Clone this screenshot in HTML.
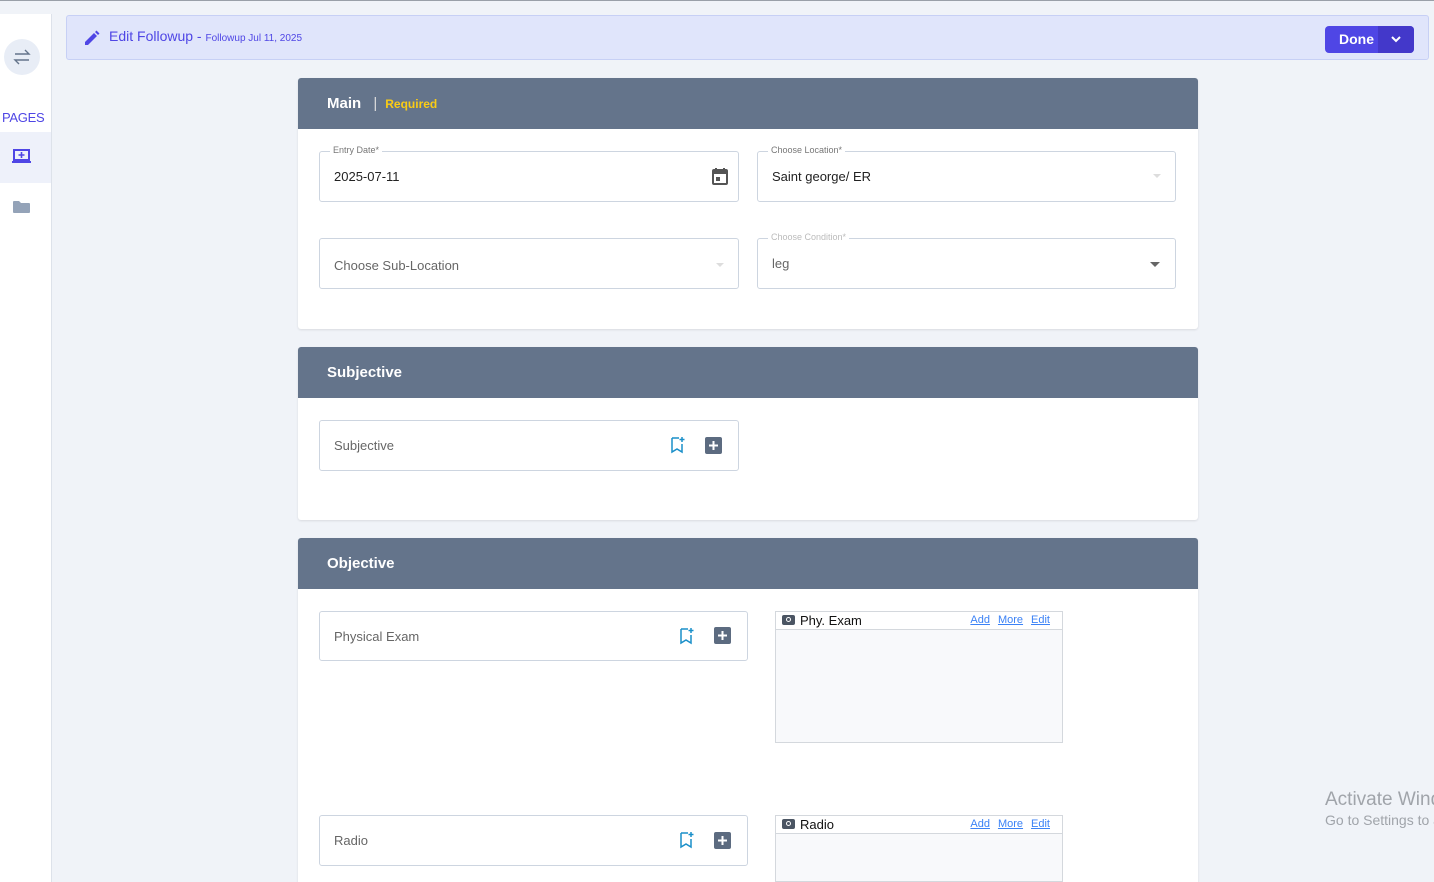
<!DOCTYPE html>
<html><head><meta charset="utf-8">
<style>
*{box-sizing:border-box;margin:0;padding:0}
html,body{width:1434px;height:882px;overflow:hidden}
body{background:#f0f3f8;font-family:"Liberation Sans",sans-serif;position:relative}
.topline{position:absolute;left:0;top:0;width:1434px;height:1px;background:#9aa0a8}
.side{position:absolute;left:0;top:14px;width:52px;height:868px;background:#fff;border-right:1px solid #dde2ea}
.swap{position:absolute;left:4px;top:25px;width:36px;height:36px;border-radius:50%;background:#e8edf6}
.pages{position:absolute;left:2px;top:96px;font-size:13px;color:#4f46e5;letter-spacing:-.3px}
.act{position:absolute;left:0;top:118px;width:51px;height:51px;background:#eef1fa}
.hdr{position:absolute;left:66px;top:15px;width:1363px;height:45px;background:#e0e5fb;border:1px solid #c7d0f5;border-radius:3px}
.hdr .t{position:absolute;left:42px;top:12px;font-size:14px;color:#4f46e5}
.hdr .t small{font-size:10px}
.done{position:absolute;right:14px;top:10px;width:89px;height:27px;background:#4f46e5;border-radius:4px;color:#fff;font-size:14px;font-weight:bold}
.done span{position:absolute;left:14px;top:5px}
.done i{position:absolute;right:0;top:0;width:36px;height:27px;background:#4338ca;border-radius:0 4px 4px 0}
.card{position:absolute;left:298px;width:900px;background:#fff;border-radius:3px;box-shadow:0 1px 2px rgba(0,0,0,.1)}
.ch{height:51px;background:#64748b;color:#fff;font-weight:bold;font-size:15px;padding:17px 0 0 29px;border-radius:3px 3px 0 0}
.ch .req{color:#facc15;font-size:12px;margin-left:8px}
.ch .bar{color:#ddd;font-weight:normal;margin-left:8px}
.f{position:absolute;height:51px;border:1px solid #cdd5e0;border-radius:3px;background:#fff;font-size:13px;color:#222}
.f .v{position:absolute;left:14px;top:17px}
.f .l{position:absolute;left:10px;top:-7px;background:#fff;padding:0 3px;font-size:9px;color:#777}
.gray{color:#666!important}
.panel{position:absolute;left:775px;width:288px;border:1px solid #d4d8dd;background:#f8f9fb}
.panel .ph{height:18px;background:#fff;border-bottom:1px solid #d4d8dd;font-size:13px;padding:1px 0 0 24px;color:#111;position:relative}
.panel .lk{position:absolute;right:12px;top:2px;font-size:11px;color:#3b82f6}
.panel .lk u{margin-left:8px}
.cam{position:absolute;left:6px;top:3px;width:13px;height:10px;background:#4b5563;border-radius:2px}
.cam:after{content:"";position:absolute;left:4px;top:2px;width:3px;height:3px;border:1px solid #fff;border-radius:50%}
.wm{position:absolute;left:1325px;top:789px;width:109px;height:45px;overflow:hidden;color:#a0a4aa;font-size:19px;white-space:nowrap}
.wm div{font-size:14px;margin-top:1px}
</style></head><body>
<div class="topline"></div>
<div class="side">
 <div class="swap"><svg width="36" height="36" viewBox="0 0 36 36" fill="none" stroke="#64748b" stroke-width="1.4"><path d="M11 15h14l-4-4M25 21H11l4 4"/></svg></div>
 <div class="pages">PAGES</div>
 <div class="act"><svg style="position:absolute;left:12px;top:17px" width="20" height="16" viewBox="0 0 20 16"><rect x="2" y="1" width="15" height="10" fill="none" stroke="#4f46e5" stroke-width="2"/><path d="M9.5 3v6M6.5 6h6" stroke="#4f46e5" stroke-width="1.6"/><rect x="0" y="12" width="19" height="2" fill="#4f46e5"/></svg></div>
 <svg style="position:absolute;left:13px;top:186px" width="17" height="13" viewBox="0 0 17 13"><path d="M0 2a1 1 0 0 1 1-1h5l2 2h8a1 1 0 0 1 1 1v8a1 1 0 0 1-1 1H1a1 1 0 0 1-1-1z" fill="#94a3b8"/></svg>
</div>
<div class="hdr">
 <svg style="position:absolute;left:16px;top:13px" width="18" height="18" viewBox="0 0 18 18"><path d="M2 13v3h3l9-9-3-3zM12 3l3 3 1.5-1.5-3-3z" fill="#4f46e5"/></svg>
 <div class="t">Edit Followup - <small>Followup Jul 11, 2025</small></div>
 <div class="done"><span>Done</span><i><svg style="position:absolute;left:12px;top:9px" width="12" height="9" viewBox="0 0 12 9"><path d="M2 2l4 4 4-4" stroke="#fff" stroke-width="2" fill="none"/></svg></i></div>
</div>

<div class="card" style="top:78px;height:251px">
 <div class="ch">Main <span class="bar">|</span><span class="req">Required</span></div>
</div>
<div class="f" style="left:319px;top:151px;width:420px"><span class="l">Entry Date*</span><span class="v">2025-07-11</span>
 <svg style="position:absolute;right:9px;top:15px" width="18" height="19" viewBox="0 0 18 19"><rect x="2" y="3" width="14" height="14" rx="1" fill="none" stroke="#555" stroke-width="2"/><rect x="2" y="3" width="14" height="4" fill="#555"/><rect x="5" y="10" width="4" height="4" fill="#555"/><path d="M5 1v3M13 1v3" stroke="#555" stroke-width="2"/></svg></div>
<div class="f" style="left:757px;top:151px;width:419px"><span class="l">Choose Location*</span><span class="v">Saint george/ ER</span><span style="position:absolute;right:14px;top:22px;border:4px solid transparent;border-top-color:#ddd"></span></div>
<div class="f" style="left:319px;top:238px;width:420px"><span class="v gray" style="top:19px">Choose Sub-Location</span><span style="position:absolute;right:14px;top:24px;border:4px solid transparent;border-top-color:#ddd"></span></div>
<div class="f" style="left:757px;top:238px;width:419px"><span class="l" style="color:#bbb">Choose Condition*</span><span class="v gray" style="top:17px">leg</span><span style="position:absolute;right:15px;top:23px;border:5px solid transparent;border-top-color:#666"></span></div>

<div class="card" style="top:347px;height:173px"><div class="ch">Subjective</div></div>
<div class="f" style="left:319px;top:420px;width:420px"><span class="v gray">Subjective</span>
 <svg style="position:absolute;right:52px;top:15px" width="16" height="18" viewBox="0 0 16 18"><path d="M2 2h7M2 2v14l5-3 5 3V8" fill="none" stroke="#1a8fc9" stroke-width="1.5"/><path d="M12 1v5M9.5 3.5h5" stroke="#1a8fc9" stroke-width="1.5"/></svg>
 <svg style="position:absolute;right:16px;top:16px" width="17" height="17" viewBox="0 0 17 17"><rect width="17" height="17" rx="2" fill="#5c6b80"/><path d="M8.5 4v9M4 8.5h9" stroke="#fff" stroke-width="2"/></svg></div>

<div class="card" style="top:538px;height:360px"><div class="ch">Objective</div></div>
<div class="f" style="left:319px;top:611px;width:429px;height:50px"><span class="v gray">Physical Exam</span>
 <svg style="position:absolute;right:52px;top:15px" width="16" height="18" viewBox="0 0 16 18"><path d="M2 2h7M2 2v14l5-3 5 3V8" fill="none" stroke="#1a8fc9" stroke-width="1.5"/><path d="M12 1v5M9.5 3.5h5" stroke="#1a8fc9" stroke-width="1.5"/></svg>
 <svg style="position:absolute;right:16px;top:15px" width="17" height="17" viewBox="0 0 17 17"><rect width="17" height="17" rx="2" fill="#5c6b80"/><path d="M8.5 4v9M4 8.5h9" stroke="#fff" stroke-width="2"/></svg></div>
<div class="panel" style="top:611px;height:132px"><div class="ph"><span class="cam"></span>Phy. Exam<span class="lk"><u>Add</u><u>More</u><u>Edit</u></span></div></div>
<div class="f" style="left:319px;top:815px;width:429px;height:51px"><span class="v gray">Radio</span>
 <svg style="position:absolute;right:52px;top:15px" width="16" height="18" viewBox="0 0 16 18"><path d="M2 2h7M2 2v14l5-3 5 3V8" fill="none" stroke="#1a8fc9" stroke-width="1.5"/><path d="M12 1v5M9.5 3.5h5" stroke="#1a8fc9" stroke-width="1.5"/></svg>
 <svg style="position:absolute;right:16px;top:16px" width="17" height="17" viewBox="0 0 17 17"><rect width="17" height="17" rx="2" fill="#5c6b80"/><path d="M8.5 4v9M4 8.5h9" stroke="#fff" stroke-width="2"/></svg></div>
<div class="panel" style="top:815px;height:67px"><div class="ph"><span class="cam"></span>Radio<span class="lk"><u>Add</u><u>More</u><u>Edit</u></span></div></div>

<div class="wm">Activate Windows<div>Go to Settings to activate Windows.</div></div>
</body></html>
